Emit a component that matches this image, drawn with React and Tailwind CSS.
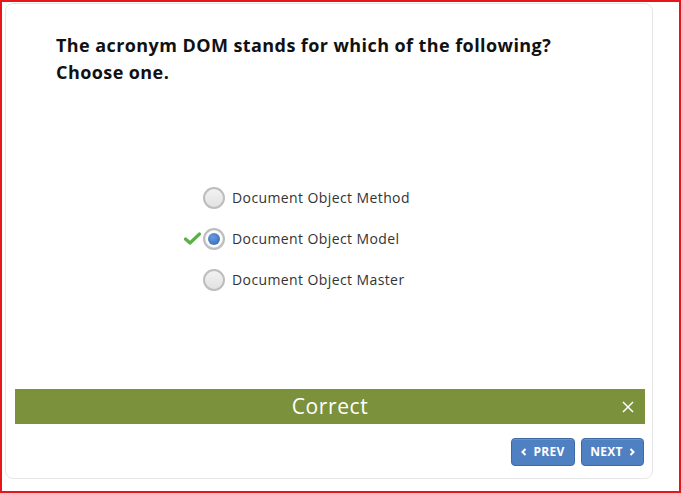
import React from "react";

function Radio({ checked }) {
  return (
    <span className="flex h-[22px] w-[22px] items-center justify-center rounded-full border-2 border-[#bdbdbd] bg-[linear-gradient(#f2f2f2,#e2e2e2)]">
      {checked && (
        <span className="flex h-[16px] w-[16px] items-center justify-center rounded-full bg-white">
          <span className="h-[12px] w-[12px] rounded-full bg-[radial-gradient(circle_at_40%_35%,#6a9be0,#2f62b0)]" />
        </span>
      )}
    </span>
  );
}

function Check() {
  return (
    <svg width="17" height="13" viewBox="0 0 17 13">
      <path d="M1.5 7 L6 11 L15.5 2" fill="none" stroke="#5cb04a" strokeWidth="3.2" strokeLinecap="round" strokeLinejoin="round" />
    </svg>
  );
}

const options = [
  { label: "Document Object Method", checked: false, correct: false },
  { label: "Document Object Model", checked: true, correct: true },
  { label: "Document Object Master", checked: false, correct: false },
];

export default function App() {
  return (
    <div
      className="h-[493px] w-[681px] border-2 border-[#e8161b] bg-white"
      style={{ fontFamily: '"Open Sans", "Liberation Sans", sans-serif' }}
    >
      <div className="ml-[3px] mt-[1px] flex h-[476px] w-[648px] flex-col rounded-[8px] border border-[#e6e6e6] bg-white">
        <div className="pl-[50px] pt-[28px] text-[18px] font-bold leading-[27px] tracking-[0.42px] text-[#111]">
          <div>The acronym DOM stands for which of the following?</div>
          <div>Choose one.</div>
        </div>

        <div className="ml-[178px] mt-[91px] flex flex-col">
          {options.map((o) => (
            <div key={o.label} className="flex h-[41px] items-center">
              <span className="flex w-[19px] items-center">{o.correct && <Check />}</span>
              <Radio checked={o.checked} />
              <span className="ml-[7px] text-[14px] tracking-[0.4px] text-[#333]">{o.label}</span>
            </div>
          ))}
        </div>

        <div className="relative ml-[9px] mr-[7px] mt-[89px] flex h-[35px] items-center justify-center bg-[#7b913c]">
          <span className="text-[21px] font-normal tracking-[0.6px] text-white">Correct</span>
          <svg className="absolute right-[11px] top-[12px]" width="12" height="12" viewBox="0 0 12 12">
            <path d="M1 1 L11 11 M11 1 L1 11" stroke="white" strokeWidth="1.5" />
          </svg>
        </div>

        <div className="mr-[8px] mt-[14px] flex justify-end gap-[6px]">
          <button className="flex h-[28px] w-[64px] items-center justify-center gap-[6px] rounded-[4px] border border-[#3d6aa5] bg-[#4f81c2] text-[12px] font-bold tracking-[0.3px] text-white shadow-[inset_0_1px_0_rgba(255,255,255,0.15)]">
            <svg width="6" height="8" viewBox="0 0 6 8">
              <path d="M4.5 1 L1.5 4 L4.5 7" fill="none" stroke="white" strokeWidth="2" />
            </svg>
            PREV
          </button>
          <button className="flex h-[28px] w-[63px] items-center justify-center gap-[6px] rounded-[4px] border border-[#3d6aa5] bg-[#4f81c2] text-[12px] font-bold tracking-[0.3px] text-white shadow-[inset_0_1px_0_rgba(255,255,255,0.15)]">
            NEXT
            <svg width="6" height="8" viewBox="0 0 6 8">
              <path d="M1.5 1 L4.5 4 L1.5 7" fill="none" stroke="white" strokeWidth="2" />
            </svg>
          </button>
        </div>
      </div>
    </div>
  );
}
